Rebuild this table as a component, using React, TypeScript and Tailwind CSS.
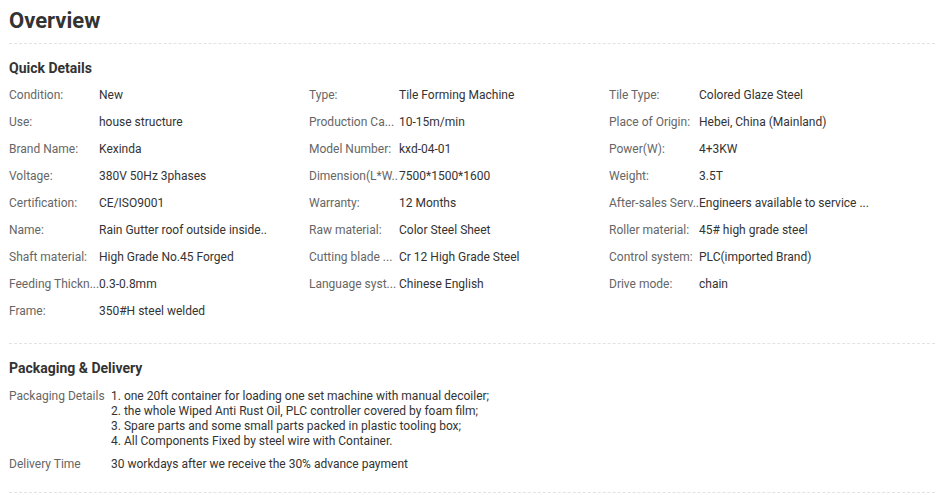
const quick: [string, string][] = [
  ["Condition:", "New"], ["Type:", "Tile Forming Machine"], ["Tile Type:", "Colored Glaze Steel"],
  ["Use:", "house structure"], ["Production Ca...", "10-15m/min"], ["Place of Origin:", "Hebei, China (Mainland)"],
  ["Brand Name:", "Kexinda"], ["Model Number:", "kxd-04-01"], ["Power(W):", "4+3KW"],
  ["Voltage:", "380V 50Hz 3phases"], ["Dimension(L*W..", "7500*1500*1600"], ["Weight:", "3.5T"],
  ["Certification:", "CE/ISO9001"], ["Warranty:", "12 Months"], ["After-sales Serv..", "Engineers available to service ..."],
  ["Name:", "Rain Gutter roof outside inside.."], ["Raw material:", "Color Steel Sheet"], ["Roller material:", "45# high grade steel"],
  ["Shaft material:", "High Grade No.45 Forged"], ["Cutting blade ...", "Cr 12 High Grade Steel"], ["Control system:", "PLC(imported Brand)"],
  ["Feeding Thickn...", "0.3-0.8mm"], ["Language syst...", "Chinese English"], ["Drive mode:", "chain"],
  ["Frame:", "350#H steel welded"],
];

const packing = [
  "1. one 20ft container for loading one set machine with manual decoiler;",
  "2. the whole Wiped Anti Rust Oil, PLC controller covered by foam film;",
  "3. Spare parts and some small parts packed in plastic tooling box;",
  "4. All Components Fixed by steel wire with Container.",
];

export default function App() {
  return (
    <div className="bg-white w-[945px] h-[495px] overflow-hidden px-[9px] text-[#333] font-['Roboto',sans-serif]">
      <div className="w-[926px]">
        <div className="pt-[7px] pb-[8px] border-b border-dashed border-[#e3e3e3]">
          <h1 className="text-[22px] leading-[28px] font-bold">Overview</h1>
        </div>

        <div className="pt-[14px] pb-[19px] border-b border-dashed border-[#e3e3e3]">
          <h2 className="text-[14px] leading-[20px] font-bold mb-[3px]">Quick Details</h2>
          <div className="grid grid-cols-[300px_300px_300px] text-[12px]">
            {quick.map(([k, v], i) => (
              <div key={i} className="flex h-[27px] items-center whitespace-nowrap">
                <span className="w-[90px] shrink-0 text-[#666]">{k}</span>
                <span>{v}</span>
              </div>
            ))}
          </div>
        </div>

        <div className="pt-[14px] pb-[20px] border-b border-dashed border-[#e3e3e3] text-[12px] leading-[15px]">
          <h2 className="text-[14px] leading-[20px] font-bold mb-[11px]">Packaging &amp; Delivery</h2>
          <div className="flex">
            <span className="w-[102px] shrink-0 text-[#666]">Packaging Details</span>
            <div>
              {packing.map((l) => (
                <div key={l}>{l}</div>
              ))}
            </div>
          </div>
          <div className="flex mt-[8px]">
            <span className="w-[102px] shrink-0 text-[#666]">Delivery Time</span>
            <span>30 workdays after we receive the 30% advance payment</span>
          </div>
        </div>
      </div>
    </div>
  );
}
